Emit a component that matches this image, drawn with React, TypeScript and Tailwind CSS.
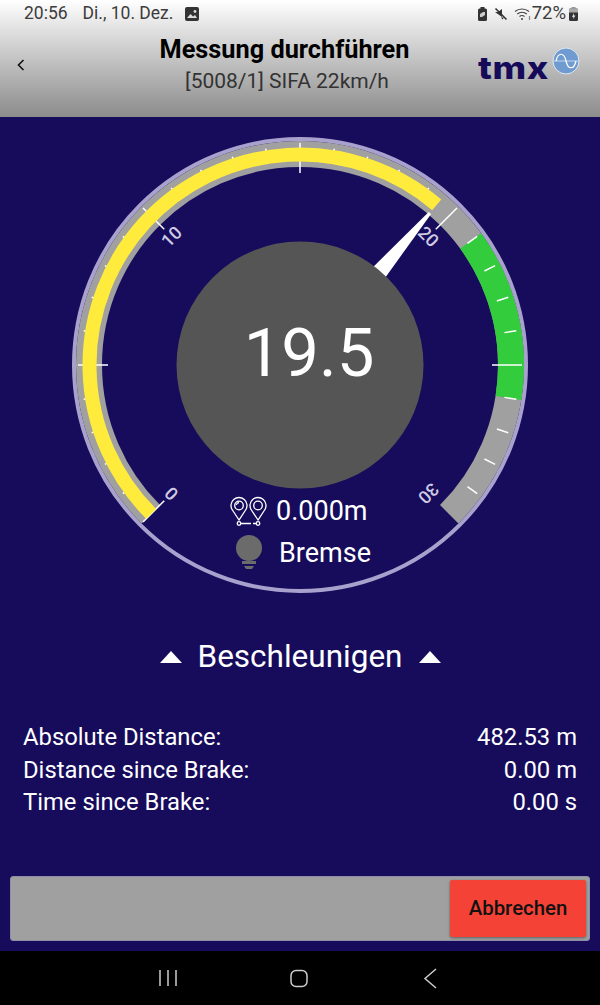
const CX = 230
const CY = 230

// gauge value 0-30 maps onto -135..135 degrees, 0 deg is straight up
function point(value: number, r: number) {
  const a = (((value - 15) * 9 - 90) * Math.PI) / 180
  return { x: CX + r * Math.cos(a), y: CY + r * Math.sin(a) }
}

function arc(from: number, to: number, r: number) {
  const a = point(from, r)
  const b = point(to, r)
  const large = (to - from) * 9 > 180 ? 1 : 0
  return `M${a.x} ${a.y}A${r} ${r} 0 ${large} 1 ${b.x} ${b.y}`
}

const ticks = Array.from({ length: 30 }, (_, i) => i)
const labels = [
  { text: "0", value: 0 },
  { text: "10", value: 10 },
  { text: "20", value: 20 },
  { text: "30", value: 30 },
]

function Gauge() {
  const tipA = point(19.45, 200)
  const tipB = point(19.55, 200)
  const baseA = point(19.08, 122)
  const baseB = point(19.92, 122)
  return (
    <svg width="460" height="460" viewBox="0 0 460 460" className="block">
      <circle cx={CX} cy={CY} r="226" fill="none" stroke="#a9a1cd" strokeWidth="4" />
      <path d={arc(0, 30, 211)} fill="none" stroke="#a0a0a0" strokeWidth="26" />
      <path d={arc(21, 26, 211)} fill="none" stroke="#33cc3c" strokeWidth="26" />
      {ticks.map((v) => {
        const major = v % 5 === 0
        const a = point(v, major ? 192 : 207)
        const b = point(v, major ? 222 : 219)
        return <line key={v} x1={a.x} y1={a.y} x2={b.x} y2={b.y} stroke="#fff" strokeWidth="1.5" />
      })}
      <path d={arc(0, 19.5, 210.5)} fill="none" stroke="#ffeb3b" strokeWidth="14" />
      <polygon
        points={`${tipA.x},${tipA.y} ${tipB.x},${tipB.y} ${baseB.x},${baseB.y} ${baseA.x},${baseA.y}`}
        fill="#fff"
      />
      <circle cx={CX} cy={CY} r="123.5" fill="#555555" />
      {labels.map((l) => {
        const p = point(l.value, 182)
        return (
          <text
            key={l.text}
            x={p.x}
            y={p.y}
            textAnchor="middle"
            dominantBaseline="central"
            fontSize="18"
            fontWeight="500"
            fill="#cfcbe4"
            fontFamily="Roboto, sans-serif"
            transform={`rotate(${(l.value - 15) * 9} ${p.x} ${p.y})`}
          >
            {l.text}
          </text>
        )
      })}
    </svg>
  )
}

function PinsIcon() {
  return (
    <svg width="38" height="30" viewBox="0 0 38 30" fill="none" stroke="#fff" strokeWidth="1.3">
      <path d="M9 24 2.4 14a8 8 0 1 1 13.2 0Z" />
      <path d="M28 24 21.4 14a8 8 0 1 1 13.2 0Z" />
      <circle cx="9" cy="9.5" r="4.3" />
      <path d="M6.3 9a3 3 0 0 1 2.7-2.5" />
      <circle cx="28" cy="9.5" r="4.3" />
      <circle cx="9" cy="27.5" r="1.8" />
      <circle cx="28" cy="27.5" r="1.8" />
      <path d="M11 27.5h10M23 27.5h3" />
    </svg>
  )
}

function BulbIcon() {
  return (
    <svg width="28" height="36" viewBox="0 0 28 36" fill="#6b6b6b">
      <circle cx="14" cy="13" r="13" />
      <rect x="7" y="26" width="14" height="3" />
      <path d="M9 31h10l-2 3h-6Z" />
    </svg>
  )
}

function StatusBar() {
  return (
    <div className="flex h-[27px] items-center justify-between pl-[24px] pr-[22px] text-[17.5px] text-[#3c3c3c]">
      <div className="flex items-center">
        <span>20:56</span>
        <span className="ml-[15px]">Di., 10. Dez.</span>
        <svg width="14" height="14" viewBox="0 0 14 14" className="ml-[12px]">
          <rect width="14" height="14" rx="2" fill="#333" />
          <path d="M2 11 5.5 7l2.5 2.5L10 8l2 3Z" fill="#ddd" />
          <circle cx="10" cy="4.5" r="1.4" fill="#ddd" />
        </svg>
      </div>
      <div className="flex items-center">
        <svg width="9" height="14" viewBox="0 0 9 14">
          <rect y="1.5" width="9" height="12.5" rx="1.5" fill="#333" />
          <rect x="2.5" width="4" height="2" fill="#333" />
          <path d="M2 10V7l3-2h2v3l-3 2Z" fill="#ccc" />
        </svg>
        <svg width="14" height="14" viewBox="0 0 14 14" className="ml-[7px]" fill="#333">
          <path d="M1 5h3l4-3v8Z" />
          <path d="M1.5 1.5 12.5 12.5" stroke="#333" strokeWidth="1.6" />
          <path d="M7 10.5h3l-1.5 2Z" />
        </svg>
        <svg width="18" height="15" viewBox="0 0 18 15" className="ml-[6px]" fill="none" stroke="#444" strokeWidth="1.2">
          <path d="M1 5.5a11 11 0 0 1 14 0M3.2 8a7.6 7.6 0 0 1 9.6 0M5.5 10.5a4 4 0 0 1 5 0" />
          <circle cx="8" cy="13" r="1" fill="#444" stroke="none" />
          <path d="M15.5 14v-4" stroke="#888" />
        </svg>
        <span className="text-[18.5px]">72%</span>
        <svg width="9" height="14" viewBox="0 0 9 14" className="ml-[3px]">
          <rect y="1.5" width="9" height="12.5" rx="1.5" fill="#333" />
          <rect y="1.5" width="9" height="4" fill="#aaa" />
          <rect x="2.5" width="4" height="2" fill="#999" />
          <path d="M5 6 3 10h1.5L4 12.5 6.5 8.5H5Z" fill="#ddd" />
        </svg>
      </div>
    </div>
  )
}

function Logo() {
  return (
    <div className="flex items-start">
      <span className="mt-[2px] w-[74px] origin-left scale-x-[1.17] text-[31px] leading-[32px] font-extrabold tracking-[0.5px] text-[#160b5a] font-['Inter',sans-serif]">
        tmx
      </span>
      <svg width="28" height="28" viewBox="0 0 28 28" className="-mt-[3px]">
        <circle cx="14" cy="14" r="13" fill="#6f9bd0" stroke="#dfe6f0" strokeWidth="1" />
        <path d="M1.5 14h25" stroke="#dbe6f3" strokeWidth="0.8" />
        <path d="M4 14c2-9 8-9 10 0s8 9 10 0" fill="none" stroke="#fff" strokeWidth="1.2" />
      </svg>
    </div>
  )
}

function Row({ label, value }: { label: string; value: string }) {
  return (
    <div className="flex h-[32.5px] items-center justify-between">
      <span>{label}</span>
      <span>{value}</span>
    </div>
  )
}

export default function App() {
  return (
    <div className="flex h-[1005px] w-[600px] flex-col overflow-hidden bg-[#170c5b] font-['Roboto',sans-serif] text-white">
      <header className="h-[117px] shrink-0 bg-gradient-to-b from-white via-[#c4c4c4] to-[#8c8c8c]">
        <StatusBar />
        <div className="relative flex h-[90px] flex-col items-center pr-[31px] pt-[5px]">
          <h1 className="text-[25.3px] leading-[36px] font-bold text-black">Messung durchführen</h1>
          <p className="ml-[5px] text-[21px] leading-[26px] text-[#333]">[5008/1] SIFA 22km/h</p>
          <svg width="8" height="12" viewBox="0 0 8 12" className="absolute left-[17px] top-[32px]" fill="none" stroke="#111" strokeWidth="1.6">
            <path d="M6.5 1 1.5 6l5 5" />
          </svg>
          <div className="absolute left-[478px] top-[23px]">
            <Logo />
          </div>
        </div>
      </header>

      <main className="flex min-h-0 flex-1 flex-col">
        <div className="relative mx-auto mt-[18px] h-[460px] w-[460px] shrink-0">
          <Gauge />
          <div className="absolute inset-x-0 top-[181px] pl-[18px] text-center text-[67px] leading-[74px] font-normal">19.5</div>
          <div className="absolute inset-x-0 top-[359px] flex flex-col">
            <div className="flex h-[34px] items-center pl-[160px] text-[27px]">
              <PinsIcon />
              <span className="ml-[8px]">0.000m</span>
            </div>
            <div className="flex h-[50px] items-center pl-[165px] text-[27px]">
              <BulbIcon />
              <span className="ml-[16px]">Bremse</span>
            </div>
          </div>
        </div>

        <div className="mt-[43px] flex h-[38px] shrink-0 items-center justify-center text-[31.5px]">
          <span className="h-0 w-0 border-x-[11px] border-b-[12px] border-x-transparent border-b-white" />
          <span className="mx-[16px]">Beschleunigen</span>
          <span className="h-0 w-0 border-x-[11px] border-b-[12px] border-x-transparent border-b-white" />
        </div>

        <div className="mt-[46px] px-[23px] text-[23.8px]">
          <Row label="Absolute Distance:" value="482.53 m" />
          <Row label="Distance since Brake:" value="0.00 m" />
          <Row label="Time since Brake:" value="0.00 s" />
        </div>

        <div className="mx-[10px] mb-[10px] mt-auto flex h-[65px] items-center justify-end rounded-[3px] border border-[#8f8da8] bg-[#a0a0a0] pr-[3px]">
          <button className="h-[57px] w-[136px] rounded-[2px] bg-[#f44336] text-[20.4px] font-medium text-[#111] shadow-[0_1px_3px_rgba(0,0,0,0.4)]">
            Abbrechen
          </button>
        </div>
      </main>

      <nav className="flex h-[54px] shrink-0 items-center justify-center bg-black">
        <svg width="300" height="22" viewBox="0 0 300 22" fill="none" stroke="#ccc" strokeWidth="1.5">
          <path d="M10 3v16M18 3v16M26 3v16" />
          <rect x="141" y="3.5" width="16" height="16" rx="5" />
          <path d="M286 2 275 11.5l11 9.5" />
        </svg>
      </nav>
    </div>
  )
}
